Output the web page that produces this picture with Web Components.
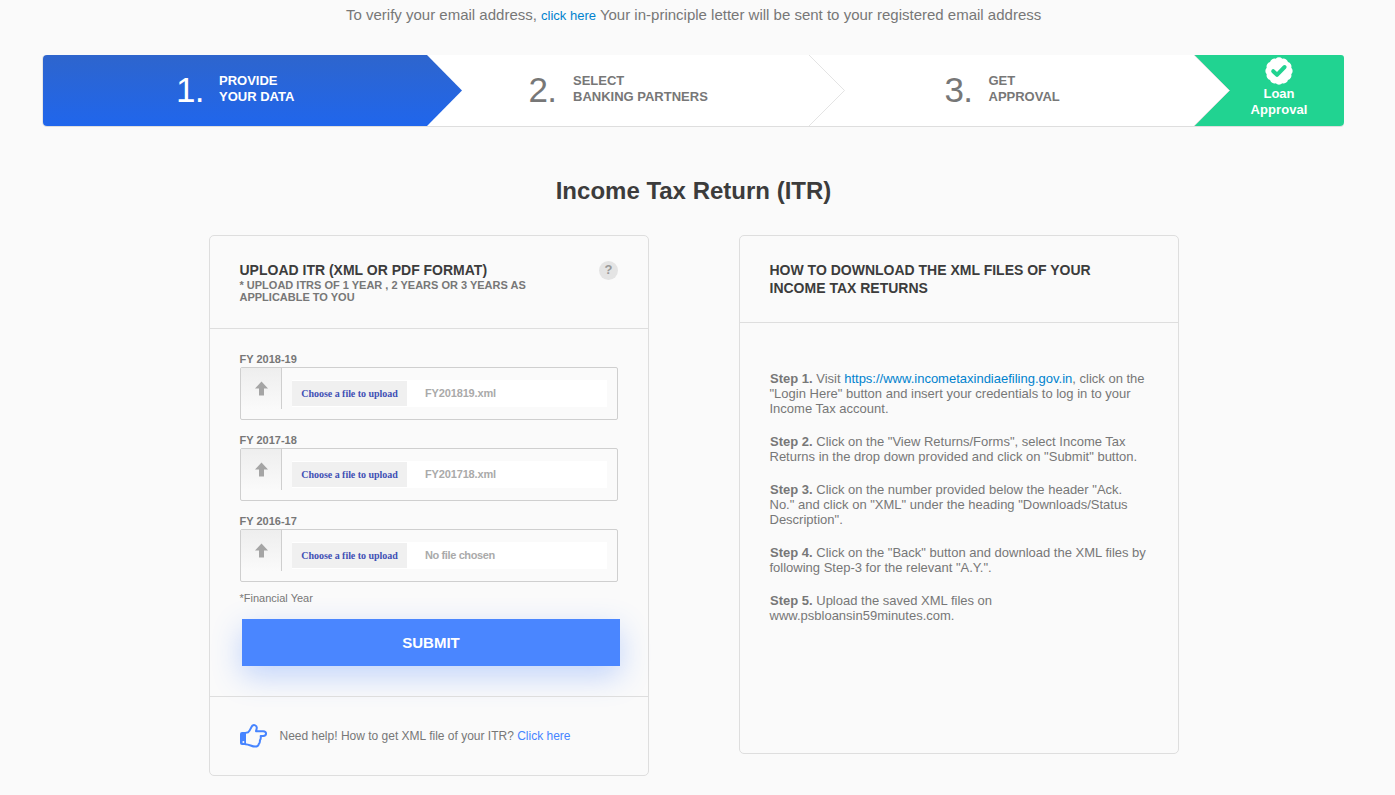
<!DOCTYPE html>
<html lang="en">
<head>
<meta charset="utf-8">
<title>Income Tax Return (ITR)</title>
<style>
html,body{margin:0;padding:0}
body{width:1395px;height:795px;overflow:hidden;background:#fafafa;font-family:"Liberation Sans",Arial,sans-serif;color:#777}
</style>
</head>
<body>
<itr-page></itr-page>
<script>
function define(name, html, setup){
  customElements.define(name, class extends HTMLElement{
    connectedCallback(){
      if(this.shadowRoot) return;
      const root=this.attachShadow({mode:'open'});
      root.innerHTML=html;
      if(setup) setup(root,this);
    }
  });
}

define('verified-icon', `<style>:host{display:block;width:28px;height:28px}svg{display:block}</style>
<svg width="28" height="28" viewBox="-14 -14 28 28"><path class="seal" fill="#fff"/><path d="M-5.8 .2L-2 3.8L5.6 -4" fill="none" stroke="#21d391" stroke-width="4" stroke-linecap="round" stroke-linejoin="round"/></svg>`,
root=>{
  let d='';
  for(let i=0;i<12;i++){
    const a=i*Math.PI/6-Math.PI/12,b=a+Math.PI/6;
    const p=t=>(12.7*Math.cos(t)).toFixed(2)+' '+(12.7*Math.sin(t)).toFixed(2);
    d+=(i?'':'M'+p(a))+'A4.6 4.6 0 0 1 '+p(b);
  }
  root.querySelector('.seal').setAttribute('d',d+'Z');
});

define('hand-icon', `<style>:host{display:block;width:28px;height:24px}svg{display:block}</style>
<svg width="28" height="24" viewBox="0 0 28 24" fill="none" stroke="#4684ff" stroke-width="2" stroke-linejoin="round" stroke-linecap="round">
<path d="M5.5 8.9L8.2 8.2C10.5 6.5 10.8 3.2 12.5 1.6C14 .6 16.7 1.2 16.8 3.6C16.8 5 16.3 6 16 7.2H23.2C27.1 7.2 27 12 23.2 12H20.7C21 13.8 20.8 15.2 19.9 16.3C20.1 18 19.8 19.2 18.7 20.3C18.4 22.1 17.2 22.6 15.2 22.6C11.8 22.6 9.5 20.4 5.5 20.2"/>
<path d="M2 8.9H5V20.1H2C1.3 20.1 1 19.8 1 19.1V9.9C1 9.2 1.3 8.9 2 8.9Z" fill="#4684ff"/>
<circle cx="3.4" cy="18.1" r="1" fill="#fafafa" stroke="none"/></svg>`);

define('wizard-step', `<style>
:host{display:flex;flex:0 0 384px;height:71px;box-sizing:border-box;align-items:center;color:#777}
.n{font-size:35px;line-height:40px;width:var(--nw,43px);white-space:nowrap;letter-spacing:-.8px;padding-bottom:2px}
.t{font-size:13px;line-height:16px;font-weight:bold;padding-bottom:3px;white-space:pre}
</style><div class="n"></div><div class="t"><slot></slot></div>`,
(root,el)=>{root.querySelector('.n').textContent=el.getAttribute('number')+'.'});

define('wizard-bar', `<style>
:host{display:flex;position:relative;width:1301px;height:71px;margin:0 0 0 43px;background:#fff;border-radius:4px;box-shadow:0 1px 0 #dedede,-1px 0 0 #e6e6e6;overflow:visible}
svg{position:absolute;left:0;top:0}
wizard-step,.final{position:relative}
.final{width:149px;display:flex;flex-direction:column;align-items:center;color:#fff;font-weight:bold;font-size:13px;line-height:16px;padding-top:2px;box-sizing:border-box;text-align:center}
.final span{display:block;width:100%;padding-left:19px;box-sizing:border-box}
verified-icon{margin-left:19px;margin-bottom:1px}
#l2{letter-spacing:.1px}
</style>
<svg width="1301" height="71"><defs><linearGradient id="g" x2="0" y2="1"><stop stop-color="#2e65cd"/><stop offset="1" stop-color="#2066ec"/></linearGradient></defs>
<path d="M4 0H384L419 35.5L384 71H4Q0 71 0 67V4Q0 0 4 0Z" fill="url(#g)"/>
<path d="M766 0L801.5 35.5L766 71" fill="none" stroke="#e4e4e4"/>
<path d="M1151.5 0H1298Q1301 0 1301 3V67Q1301 71 1297 71H1151.5L1186.5 35.5Z" fill="#21d391"/>
<path d="M1151 0L1186.5 35.5L1151 71" fill="none" stroke="#d5ddd9"/></svg>
<wizard-step number="1" style="padding-left:133px;color:#fff"><slot name="one"></slot></wizard-step>
<wizard-step number="2" style="padding-left:101.5px;--nw:44.5px"><slot name="two"></slot></wizard-step>
<wizard-step number="3" style="padding-left:133.5px;--nw:44px"><slot name="three"></slot></wizard-step>
<div class="final"><verified-icon></verified-icon><span>Loan</span><span id="l2">Approval</span></div>`);

define('info-card', `<style>
:host{display:block;box-sizing:border-box;width:440px;border:1px solid #dedede;border-radius:5px}
header{box-sizing:border-box;height:var(--head);border-bottom:1px solid #dedede;padding:25px 30px 0 29.5px;display:flex;justify-content:space-between}
h2{margin:0;font-size:14px;line-height:18px;color:#3c3c3c;font-weight:bold;white-space:pre}
</style><header><div><h2><slot name="title"></slot></h2><slot name="sub"></slot></div><slot name="action"></slot></header><slot></slot>`);

define('file-row', `<style>
:host{display:block;height:81px}
label{display:block;font-size:11px;line-height:16px;font-weight:bold;margin-left:-.5px}
.box{box-sizing:border-box;width:378px;height:53px;border:1px solid #cfcfcf;border-radius:2px;display:flex}
.ic{box-sizing:border-box;width:41px;height:41px;border-right:1px solid #cfcfcf;background:linear-gradient(#eee,#fafafa);display:flex;align-items:center;justify-content:center}
.in{margin:11.5px 0 0 10px;width:315px;height:27px;background:#fff;display:flex;align-items:center}
.in b{width:115px;height:25px;background:#f0f0f0;color:#3f51b5;font:bold 10px/25px "Liberation Serif",serif;text-align:center;white-space:nowrap;letter-spacing:-.04px}
.in span{font-size:11px;font-weight:bold;color:#aaa;margin-left:18px;letter-spacing:var(--ls,-.15px)}
</style><label></label><div class="box"><div class="ic"><svg width="13" height="15" viewBox="0 0 13 15"><path d="M6.5 .5L13 7.5H9V14.5H4V7.5H0Z" fill="#a5a5a5"/></svg></div><div class="in"><b>Choose a file to upload</b><span><slot></slot></span></div></div>`,
(root,el)=>{root.querySelector('label').textContent=el.getAttribute('label')});

define('how-step', `<style>:host{display:block;font-size:13px;line-height:15px;margin-bottom:18px;white-space:pre}</style><slot></slot>`);

define('itr-page', `<style>
:host{display:flex;flex-direction:column;width:1395px;height:795px}
a{color:#0082ce;text-decoration:none}
.verify{height:55px;font-size:15px;line-height:30px;padding-left:346px;white-space:pre}
.verify a{font-size:13px}
h1{margin:50px 0 29px;font-size:24px;line-height:30px;color:#3c3c3c;text-align:center;padding-right:8px}
.cards{display:flex;gap:90px;align-items:flex-start;padding-left:209px}
.sub{font-size:11px;line-height:12px;font-weight:bold;white-space:pre}
.help{width:19px;height:19px;border-radius:50%;background:#e4e4e4;color:#999;font-weight:bold;font-size:13px;line-height:18px;text-align:center}
.form{box-sizing:border-box;height:367px;padding:22px 0 0 30px}
.fy{font-size:11px;line-height:14px;margin-top:-3px;margin-left:-.5px}
.btn{display:block;margin:14px 0 0 2px;width:378px;height:47px;border:0;background:#4a86ff;color:#fff;font:bold 15px/47px "Liberation Sans",Arial,sans-serif;box-shadow:0 10px 30px rgba(70,132,255,.32);padding:0}
.foot{box-sizing:border-box;height:79px;border-top:1px solid #dedede;display:flex;align-items:center;padding-left:30px;font-size:12px}
.foot span{margin-left:11.5px;white-space:pre}.foot a{color:#4684ff}
.steps{padding:48px 0 0 29.5px}
.steps b{margin-left:.5px}
</style>
<div class="verify"><span>To verify your email address, </span><a>click here</a><span> Your in-principle letter will be sent to your registered email address</span></div>
<wizard-bar><span slot="one">PROVIDE
YOUR DATA</span><span slot="two">SELECT
BANKING PARTNERS</span><span slot="three">GET
APPROVAL</span></wizard-bar>
<h1>Income Tax Return (ITR)</h1>
<div class="cards">
<info-card style="--head:93px;height:541px"><span slot="title">UPLOAD ITR (XML OR PDF FORMAT)</span><div slot="sub" class="sub">* UPLOAD ITRS OF 1 YEAR , 2 YEARS OR 3 YEARS AS
APPLICABLE TO YOU</div><div slot="action" class="help">?</div>
<div class="form"><file-row label="FY 2018-19">FY201819.xml</file-row><file-row label="FY 2017-18">FY201718.xml</file-row><file-row label="FY 2016-17" style="--ls:-.38px">No file chosen</file-row>
<div class="fy">*Financial Year</div><button class="btn">SUBMIT</button></div>
<div class="foot"><hand-icon></hand-icon><span>Need help! How to get XML file of your ITR? <a>Click here</a></span></div></info-card>
<info-card style="--head:87px;height:519px"><span slot="title">HOW TO DOWNLOAD THE XML FILES OF YOUR
INCOME TAX RETURNS</span>
<div class="steps"><how-step><div><b>Step 1.</b> Visit <a>https://www.incometaxindiaefiling.gov.in</a>, click on the</div><div>"Login Here" button and insert your credentials to log in to your</div><div>Income Tax account.</div></how-step><how-step><div><b>Step 2.</b> Click on the "View Returns/Forms", select Income Tax</div><div>Returns in the drop down provided and click on "Submit" button.</div></how-step><how-step><div><b>Step 3.</b> Click on the number provided below the header "Ack.</div><div>No." and click on "XML" under the heading "Downloads/Status</div><div>Description".</div></how-step><how-step><div><b>Step 4.</b> Click on the "Back" button and download the XML files by</div><div>following Step-3 for the relevant "A.Y.".</div></how-step><how-step><div><b>Step 5.</b> Upload the saved XML files on</div><div>www.psbloansin59minutes.com.</div></how-step></div></info-card>
</div>`);
</script>
</body>
</html>
